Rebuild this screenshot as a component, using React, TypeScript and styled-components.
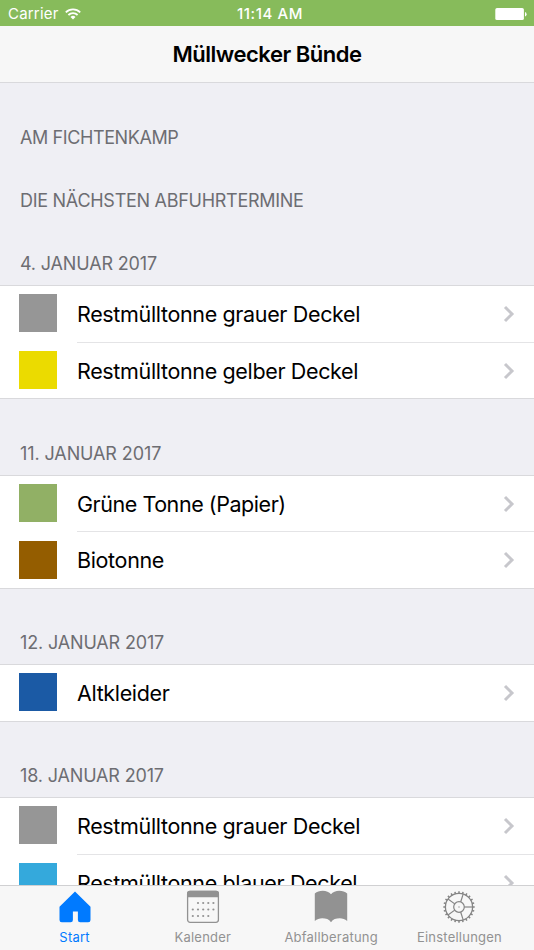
import React from "react";
import styled, { createGlobalStyle } from "styled-components";

const GlobalStyle = createGlobalStyle`
  * { box-sizing: border-box; }
  html, body { margin: 0; padding: 0; }
  body {
    font-family: Inter, "Liberation Sans", sans-serif;
    background: #efeff4;
    overflow: hidden;
  }
`;

const Screen = styled.div`
  display: flex;
  flex-direction: column;
  width: 534px;
  height: 950px;
  overflow: hidden;
  background: #efeff4;
`;

const StatusBar = styled.header`
  display: grid;
  grid-template-columns: 1fr auto 1fr;
  align-items: center;
  flex: none;
  height: 26px;
  padding: 2px 7px 0 8px;
  background: #87bb5b;
  color: #fff;
  font-size: 15px;
  line-height: 24px;
`;

const Carrier = styled.div`
  display: flex;
  align-items: center;
  gap: 6px;
  letter-spacing: 0.2px;
`;

const Clock = styled.time`
  padding-left: 5px;
  font-weight: 500;
  letter-spacing: 0.6px;
`;

const BatterySlot = styled.div`
  display: flex;
  justify-content: flex-end;
`;

const NavBar = styled.div`
  display: flex;
  align-items: center;
  justify-content: center;
  flex: none;
  height: 57px;
  background: #f7f7f7;
  border-bottom: 1px solid #d9d9dc;
`;

const Title = styled.h1`
  margin: 0;
  font-size: 22px;
  line-height: 28px;
  font-weight: 600;
  letter-spacing: -0.48px;
`;

const Content = styled.main`
  flex: 1;
  min-height: 0;
  overflow: hidden;
`;

const SectionHeader = styled.h2<{ $height: number; $spacing?: number }>`
  display: flex;
  align-items: flex-end;
  height: ${(p) => p.$height}px;
  margin: 0;
  padding: 0 20px 8px;
  color: #6d6d72;
  font-size: 18px;
  line-height: 26px;
  font-weight: 400;
  letter-spacing: ${(p) => p.$spacing ?? -0.15}px;
  text-transform: uppercase;
`;

const List = styled.ul`
  list-style: none;
  margin: 0;
  padding: 0;
  background: #fff;
  border-top: 1px solid #d9d9dc;
  border-bottom: 1px solid #d9d9dc;
`;

const Swatch = styled.span<{ $color: string; $top?: number }>`
  flex: none;
  width: 38px;
  height: 38px;
  margin: ${(p) => p.$top ?? 8}px 20px 0 0;
  background: ${(p) => p.$color};
`;

const Row = styled.li<{ $height: number }>`
  display: flex;
  align-items: stretch;
  height: ${(p) => p.$height}px;
  padding-left: 19px;
`;

const RowBody = styled.div`
  display: flex;
  flex: 1;
  align-items: center;
  justify-content: space-between;
  padding-right: 19px;

  ${Row} + ${Row} > & {
    border-top: 1px solid #e4e4e6;
  }
`;

const Label = styled.span<{ $spacing?: number }>`
  font-size: 21.5px;
  line-height: 28px;
  letter-spacing: ${(p) => p.$spacing ?? -0.35}px;
  white-space: nowrap;
`;

const TabBar = styled.nav`
  display: flex;
  justify-content: center;
  flex: none;
  height: 65px;
  padding: 0 10px;
  background: #f7f7f7;
  border-top: 1px solid #d0d0d2;
`;

const Tab = styled.a<{ $active?: boolean }>`
  display: flex;
  flex-direction: column;
  align-items: center;
  width: 128.3px;
  flex: none;
  padding-top: 4px;
  color: ${(p) => (p.$active ? "#007aff" : "#929292")};
  font-size: 13px;
  line-height: 16px;
`;

const TabLabel = styled.span`
  margin-top: 5px;
  letter-spacing: 0.22px;
`;

const WifiIcon = () => (
  <svg width="16" height="12" viewBox="0 0 16 12" fill="none" stroke="#fff" strokeWidth="1.8">
    <path d="M0.8 4.3a10.3 10.3 0 0 1 14.4 0" />
    <path d="M3.4 7a6.6 6.6 0 0 1 9.2 0" />
    <path d="M8 11.5 5.5 9a3.6 3.6 0 0 1 5 0Z" fill="#fff" stroke="none" />
  </svg>
);

const BatteryIcon = () => (
  <svg width="32" height="13" viewBox="0 0 32 13" fill="#fff">
    <rect x="0.3" y="0.1" width="28.6" height="12" rx="1.7" />
    <path d="M30 4q1.6.5 1.6 2.2T30 8.4Z" />
  </svg>
);

const Chevron = () => (
  <svg width="12" height="18" viewBox="0 0 12 18" fill="none" stroke="#c7c7cc" strokeWidth="3">
    <path d="M2 2l7 7-7 7" />
  </svg>
);

const HomeIcon = () => (
  <svg width="34" height="34" viewBox="0 0 34 34" fill="#007aff">
    <path d="M17 1.5 32.5 16.7V30a2.3 2.3 0 0 1-2.3 2.3h-8a2.3 2.3 0 0 1-2.3-2.3v-8.6h-5V30a2.3 2.3 0 0 1-2.3 2.3H3.8A2.3 2.3 0 0 1 1.5 30V16.7Z" />
  </svg>
);

const DOTS: [number, number][] = [
  [12, 13], [17.2, 13], [22.3, 13], [27.4, 13],
  [6.8, 19.5], [12, 19.5], [17.2, 19.5], [22.3, 19.5], [27.4, 19.5],
  [6.8, 26], [12, 26], [17.2, 26], [22.3, 26],
];

const CalendarIcon = () => (
  <svg width="34" height="34" viewBox="0 0 34 34" fill="none">
    <rect x="1.6" y="1.3" width="30.8" height="31" rx="2.5" stroke="#929292" strokeWidth="1.3" />
    <path d="M1 7.2V3.5A2.8 2.8 0 0 1 3.8.7h26.4A2.8 2.8 0 0 1 33 3.5v3.7Z" fill="#929292" />
    {DOTS.map(([x, y]) => (
      <circle key={`${x}-${y}`} cx={x} cy={y} r="1.1" fill="#929292" />
    ))}
  </svg>
);

const BookIcon = () => (
  <svg width="34" height="34" viewBox="0 0 34 34" fill="#929292">
    <path d="M.8 3.6C3 1.6 5.5.8 8.7.8c3.5 0 6.5 1.2 8.3 3.5C18.8 2 21.8.8 25.3.8c3.2 0 5.7.8 7.9 2.8V31c-2.2-1.8-4.7-2.7-7.4-2.7-3.8 0-6.8 1-8.8 3.9-2-2.9-5-3.9-8.8-3.9-2.7 0-5.2.9-7.4 2.7Z" />
  </svg>
);

const TEETH = Array.from({ length: 24 }, (_, i) => i * 15);
const SPOKES = [0, 72, 144, 216, 288];

const GearIcon = () => (
  <svg width="34" height="34" viewBox="0 0 34 34" fill="none" stroke="#858585">
    <circle cx="17" cy="17" r="13.6" strokeWidth="1.3" />
    <circle cx="17" cy="17" r="5.3" strokeWidth="1.2" />
    <circle cx="17" cy="17" r="0.7" fill="#929292" stroke="none" />
    {SPOKES.map((a) => (
      <path key={a} d="M22.3 17H30.6" strokeWidth="1.2" transform={`rotate(${a} 17 17)`} />
    ))}
    {TEETH.map((a) => (
      <path key={a} d="M30.5 17H32.7" strokeWidth="1.5" transform={`rotate(${a} 17 17)`} />
    ))}
  </svg>
);

interface Pickup {
  label: string;
  color: string;
  height: number;
  swatchTop?: number;
  spacing?: number;
}

interface Day {
  date: string;
  height: number;
  spacing?: number;
  pickups: Pickup[];
}

const DAYS: Day[] = [
  {
    date: "4. Januar 2017",
    height: 63,
    pickups: [
      { label: "Restmülltonne grauer Deckel", color: "#969696", height: 56 },
      { label: "Restmülltonne gelber Deckel", color: "#ebdb00", height: 56, swatchTop: 9 },
    ],
  },
  {
    date: "11. Januar 2017",
    height: 76,
    spacing: -0.1,
    pickups: [
      { label: "Grüne Tonne (Papier)", color: "#91b065", height: 55, spacing: -0.45 },
      { label: "Biotonne", color: "#945d00", height: 57, swatchTop: 10 },
    ],
  },
  {
    date: "12. Januar 2017",
    height: 75,
    pickups: [{ label: "Altkleider", color: "#1b5aa5", height: 56 }],
  },
  {
    date: "18. Januar 2017",
    height: 75,
    pickups: [
      { label: "Restmülltonne grauer Deckel", color: "#969696", height: 56 },
      { label: "Restmülltonne blauer Deckel", color: "#34a9dc", height: 56, swatchTop: 9 },
    ],
  },
];

export default function App() {
  return (
    <>
      <GlobalStyle />
      <Screen>
        <StatusBar>
          <Carrier>
            Carrier
            <WifiIcon />
          </Carrier>
          <Clock>11:14 AM</Clock>
          <BatterySlot>
            <BatteryIcon />
          </BatterySlot>
        </StatusBar>
        <NavBar>
          <Title>Müllwecker Bünde</Title>
        </NavBar>
        <Content>
          <SectionHeader $height={76} $spacing={-0.4}>Am Fichtenkamp</SectionHeader>
          <SectionHeader $height={63} $spacing={-0.28}>Die nächsten Abfuhrtermine</SectionHeader>
          {DAYS.map((day) => (
            <section key={day.date}>
              <SectionHeader $height={day.height} $spacing={day.spacing}>
                {day.date}
              </SectionHeader>
              <List>
                {day.pickups.map((p) => (
                  <Row key={p.label} $height={p.height}>
                    <Swatch $color={p.color} $top={p.swatchTop} />
                    <RowBody>
                      <Label $spacing={p.spacing}>{p.label}</Label>
                      <Chevron />
                    </RowBody>
                  </Row>
                ))}
              </List>
            </section>
          ))}
        </Content>
        <TabBar>
          <Tab $active>
            <HomeIcon />
            <TabLabel>Start</TabLabel>
          </Tab>
          <Tab>
            <CalendarIcon />
            <TabLabel>Kalender</TabLabel>
          </Tab>
          <Tab>
            <BookIcon />
            <TabLabel>Abfallberatung</TabLabel>
          </Tab>
          <Tab>
            <GearIcon />
            <TabLabel>Einstellungen</TabLabel>
          </Tab>
        </TabBar>
      </Screen>
    </>
  );
}
